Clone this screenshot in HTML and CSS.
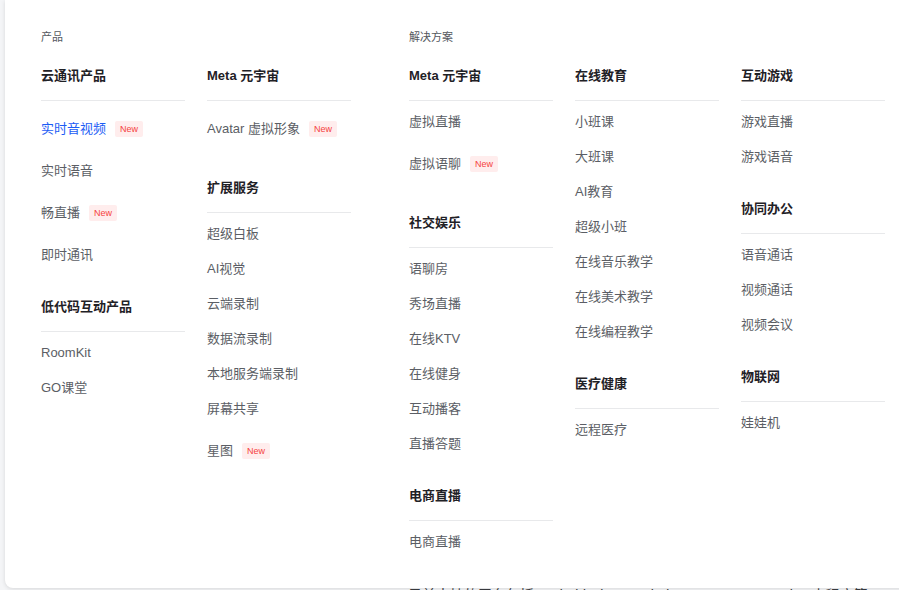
FILE: index.html
```html
<!DOCTYPE html>
<html lang="zh-CN">
<head>
<meta charset="utf-8">
<title>产品与解决方案</title>
<link rel="stylesheet" href="styles.css">
</head>
<body>
<div class="panel">
  <div class="section">
    <div class="section-label">产品</div>
    <div class="cols">
      <div class="col">
        <div class="block">
          <div class="heading">云通讯产品</div>
          <ul class="list">
            <li class="item badged active">实时音视频<span class="badge">New</span></li>
            <li class="item">实时语音</li>
            <li class="item badged">畅直播<span class="badge">New</span></li>
            <li class="item">即时通讯</li>
          </ul>
        </div>
        <div class="block">
          <div class="heading">低代码互动产品</div>
          <ul class="list">
            <li class="item">RoomKit</li>
            <li class="item">GO课堂</li>
          </ul>
        </div>
      </div>
      <div class="col">
        <div class="block">
          <div class="heading">Meta 元宇宙</div>
          <ul class="list">
            <li class="item badged">Avatar 虚拟形象<span class="badge">New</span></li>
          </ul>
        </div>
        <div class="block">
          <div class="heading">扩展服务</div>
          <ul class="list">
            <li class="item">超级白板</li>
            <li class="item">AI视觉</li>
            <li class="item">云端录制</li>
            <li class="item">数据流录制</li>
            <li class="item">本地服务端录制</li>
            <li class="item">屏幕共享</li>
            <li class="item badged">星图<span class="badge">New</span></li>
          </ul>
        </div>
      </div>
    </div>
  </div>
  <div class="section solutions">
    <div class="section-label">解决方案</div>
    <div class="cols">
      <div class="col">
        <div class="block">
          <div class="heading">Meta 元宇宙</div>
          <ul class="list">
            <li class="item">虚拟直播</li>
            <li class="item badged">虚拟语聊<span class="badge">New</span></li>
          </ul>
        </div>
        <div class="block">
          <div class="heading">社交娱乐</div>
          <ul class="list">
            <li class="item">语聊房</li>
            <li class="item">秀场直播</li>
            <li class="item">在线KTV</li>
            <li class="item">在线健身</li>
            <li class="item">互动播客</li>
            <li class="item">直播答题</li>
          </ul>
        </div>
        <div class="block">
          <div class="heading">电商直播</div>
          <ul class="list">
            <li class="item">电商直播</li>
          </ul>
        </div>
      </div>
      <div class="col">
        <div class="block">
          <div class="heading">在线教育</div>
          <ul class="list">
            <li class="item">小班课</li>
            <li class="item">大班课</li>
            <li class="item">AI教育</li>
            <li class="item">超级小班</li>
            <li class="item">在线音乐教学</li>
            <li class="item">在线美术教学</li>
            <li class="item">在线编程教学</li>
          </ul>
        </div>
        <div class="block">
          <div class="heading">医疗健康</div>
          <ul class="list">
            <li class="item">远程医疗</li>
          </ul>
        </div>
      </div>
      <div class="col">
        <div class="block">
          <div class="heading">互动游戏</div>
          <ul class="list">
            <li class="item">游戏直播</li>
            <li class="item">游戏语音</li>
          </ul>
        </div>
        <div class="block">
          <div class="heading">协同办公</div>
          <ul class="list">
            <li class="item">语音通话</li>
            <li class="item">视频通话</li>
            <li class="item">视频会议</li>
          </ul>
        </div>
        <div class="block">
          <div class="heading">物联网</div>
          <ul class="list">
            <li class="item">娃娃机</li>
          </ul>
        </div>
      </div>
    </div>
  </div>
</div>
<div class="under">目前支持的平台包括 Android、iOS、Windows、macOS、Web、小程序等</div>
</body>
</html>
```
FILE: styles.css
```css
html, body {
  margin: 0;
  padding: 0;
}
body {
  background: #f4f5f7;
  overflow: hidden;
  font-family: "Liberation Sans", "Noto Sans CJK SC", sans-serif;
  width: 899px;
  height: 590px;
}
.panel {
  position: relative;
  z-index: 1;
  box-sizing: border-box;
  margin-left: 5px;
  width: 960px;
  height: 588px;
  background: #ffffff;
  border-radius: 0 0 8px 8px;
  box-shadow: 0 1px 4px rgba(0, 0, 0, 0.12);
  display: flex;
  padding-left: 36px;
}
.section-label {
  margin-top: 29px;
  font-size: 11px;
  line-height: 16px;
  color: #55585e;
  margin-bottom: 21px;
}
.solutions {
  margin-left: 58px;
}
.cols {
  display: flex;
  gap: 22px;
}
.col {
  width: 144px;
}
.block + .block {
  margin-top: 25px;
}
.heading {
  font-size: 13px;
  line-height: 20px;
  font-weight: 700;
  color: #1f2126;
  padding-bottom: 14px;
  border-bottom: 1px solid #e8e9eb;
}
.list {
  list-style: none;
  margin: 0;
  padding: 3px 0 0;
}
.item {
  display: flex;
  align-items: center;
  height: 35px;
  font-size: 13px;
  line-height: 20px;
  color: #5b5e65;
}
.item.badged {
  height: 49px;
}
.item.active {
  color: #1c5cf5;
}
.badge {
  margin-left: 9px;
  height: 16px;
  line-height: 16px;
  padding: 0 5px;
  font-size: 9px;
  color: #f53f3f;
  background: #ffeded;
  border-radius: 2px;
}
.under {
  margin-top: -3px;
  margin-left: 408px;
  font-size: 14px;
  line-height: 20px;
  color: #3a3c40;
  white-space: nowrap;
}
```
